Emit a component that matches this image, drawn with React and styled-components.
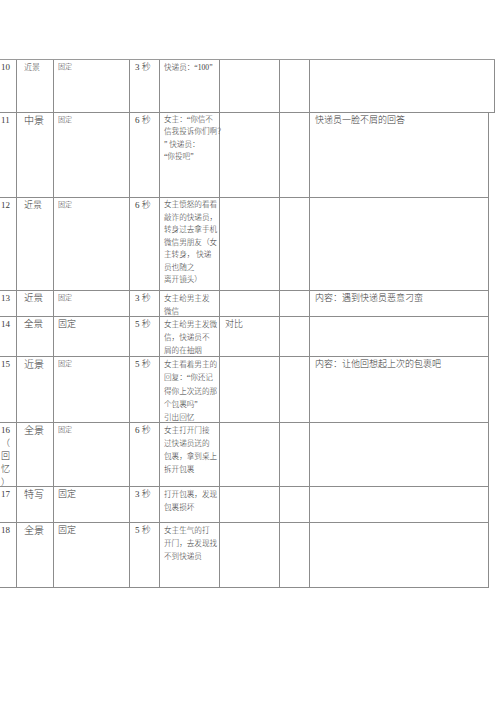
import React from 'react';
import styled, { createGlobalStyle } from 'styled-components';

const Global = createGlobalStyle`
  html, body { margin: 0; padding: 0; background: #fff; }
  body { width: 500px; height: 707px; overflow: hidden; }
`;

const Sheet = styled.div`
  padding-top: 59px;
  font-family: "Liberation Serif", "Noto Sans CJK SC", serif;
  color: #3a3a3a;
`;

const Row = styled.div`
  display: grid;
  grid-template-columns: 17px 37px 76px 30px 60px 60px 30px ${(p) => (p.$wide ? 185 : 179)}px;
  width: ${(p) => (p.$wide ? 495 : 489)}px;
  height: ${(p) => p.$h}px;
  box-sizing: border-box;
  border-bottom: 1px solid #8c8c8c;
  border-top: ${(p) => (p.$first ? '1px solid #9a9a9a' : 'none')};
`;

const Cell = styled.div`
  box-sizing: border-box;
  border-right: 1px solid #8c8c8c;
  padding: 1px 0 0 ${(p) => p.$pl || 0}px;
  font-size: ${(p) => p.$fs || 8}px;
  font-weight: 300;
  line-height: 13px;
  white-space: nowrap;
  overflow: visible;
  min-width: 0;
`;

const Line = styled.div`
  line-height: ${(p) => p.$lh || 13}px;
`;

const data = [
  { num: ['10'], shot: '近景', ss: 8, move: '固定', ms: 7, dur: '3 秒', content: ['快递员：“100”'], extra: '', note: '', h: 54, wide: true, first: true },
  { num: ['11'], shot: '中景', ss: 10, move: '固定', ms: 7, dur: '6 秒', content: ['女主：“你信不', '信我投诉你们啊？', '” 快递员：', ' “你投吧”'], lh: 12.4, extra: '', note: '快递员一脸不屑的回答', h: 85 },
  { num: ['12'], shot: '近景', ss: 9, move: '固定', ms: 7, dur: '6 秒', content: ['女主愤怒的看看', '敲诈的快递员，', '转身过去拿手机', '微信男朋友（女', '主转身，    快递', '员也随之', '离开镜头）'], lh: 12.5, extra: '', note: '', h: 93 },
  { num: ['13'], shot: '近景', ss: 9.5, move: '固定', ms: 7, dur: '3 秒', content: ['女主给男主发', '微信'], extra: '', note: '内容：遇到快递员恶意刁蛮', h: 26 },
  { num: ['14'], shot: '全景', ss: 9.5, move: '固定', ms: 9, dur: '5 秒', content: ['女主给男主发微', '信，快递员不', '屑的在抽烟'], extra: '对比', note: '', h: 40 },
  { num: ['15'], shot: '近景', ss: 10, move: '固定', ms: 7, dur: '5 秒', content: ['女主看着男主的', '回复：“你还记', '得你上次送的那', '个包裹吗”', '引出回忆'], lh: 13.3, extra: '', note: '内容：让他回想起上次的包裹吧', h: 66 },
  { num: ['16', '（', '回', '忆', '）'], shot: '全景', ss: 10, move: '固定', ms: 7, dur: '6 秒', content: ['女主打开门接', '过快递员送的', '包裹，拿到桌上', '拆开包裹'], extra: '', note: '', h: 64 },
  { num: ['17'], shot: '特写', ss: 10, move: '固定', ms: 9, dur: '3 秒', content: ['打开包裹，发现', '包裹损坏'], extra: '', note: '', h: 36 },
  { num: ['18'], shot: '全景', ss: 10, move: '固定', ms: 9, dur: '5 秒', content: ['女主生气的打', '开门，去发现找', '不到快递员'], extra: '', note: '', h: 65 },
];

export default function App() {
  return (
    <>
      <Global />
      <Sheet>
        {data.map((r) => (
          <Row key={r.num[0]} $h={r.h} $wide={r.wide} $first={r.first}>
            <Cell $pl={1} $fs={9}>
              {r.num.map((n, i) => (
                <Line key={i}>{n}</Line>
              ))}
            </Cell>
            <Cell $pl={7} $fs={r.ss}>{r.shot}</Cell>
            <Cell $pl={4} $fs={r.ms}>{r.move}</Cell>
            <Cell $pl={5} $fs={9}>{r.dur}</Cell>
            <Cell $pl={4} $fs={7.6}>
              {r.content.map((c, i) => (
                <Line key={i} $lh={r.lh}>{c}</Line>
              ))}
            </Cell>
            <Cell $pl={5} $fs={9}>{r.extra}</Cell>
            <Cell />
            <Cell $pl={5} $fs={9}>{r.note}</Cell>
          </Row>
        ))}
      </Sheet>
    </>
  );
}
